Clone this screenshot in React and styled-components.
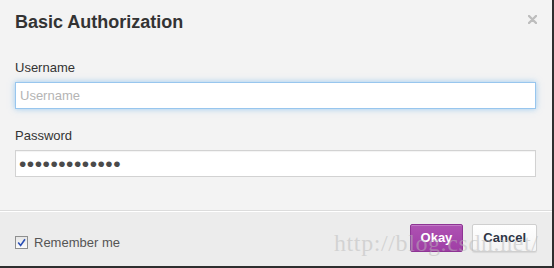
import styled, { createGlobalStyle } from 'styled-components'

const GlobalStyle = createGlobalStyle`
  html, body {
    margin: 0;
    padding: 0;
    background: #2e2e2e;
  }
  body {
    font-family: "Liberation Sans", Arial, sans-serif;
    color: #333;
  }
`

const Dialog = styled.div`
  position: relative;
  width: 552px;
  height: 266px;
  background: #f3f3f3;
  display: flex;
  flex-direction: column;
  overflow: hidden;
`

const Header = styled.div`
  display: flex;
  justify-content: space-between;
  align-items: flex-start;
  padding: 12px 15px 12px 15px;
`

const Title = styled.h3`
  margin: 0;
  font-size: 18px;
  line-height: 21px;
  font-weight: bold;
  color: #333;
`

const Close = styled.button`
  border: 0;
  background: none;
  padding: 0;
  margin-top: 3px;
  width: 9px;
  height: 9px;
  display: flex;
  cursor: pointer;
`

const Body = styled.form`
  flex: 1;
  display: flex;
  flex-direction: column;
  gap: 19px;
  padding: 15px 16px 0 15px;
`

const Field = styled.div`
  display: flex;
  flex-direction: column;
  gap: 6px;
`

const Label = styled.label`
  font-size: 13px;
  line-height: 16px;
  color: #333;
`

const Input = styled.input`
  box-sizing: border-box;
  width: 100%;
  height: 27px;
  padding: 0 4px;
  margin: 0;
  font-family: "Liberation Sans", Arial, sans-serif;
  font-size: 13px;
  color: #555;
  background: #fff;
  border: 1px solid ${(p) => (p.$focused ? '#98c6ee' : '#d2d2d2')};
  box-shadow: ${(p) =>
    p.$focused
      ? '0 0 6px rgba(82, 168, 236, 0.55)'
      : 'inset 0 1px 1px rgba(0, 0, 0, 0.05)'};
  outline: none;
  border-radius: 0;
  &::placeholder {
    color: #b4b4b4;
  }
  &[type='password'] {
    font-size: 21px;
    letter-spacing: 0.5px;
    padding-left: 3px;
    color: #4a4a4a;
  }
`

const Footer = styled.div`
  height: 55px;
  display: flex;
  align-items: center;
  justify-content: space-between;
  padding: 0 15px;
  background: #ececec;
  border-top: 1px solid #dcdcdc;
  box-shadow: inset 0 1px 0 #fff;
`

const Remember = styled.label`
  display: flex;
  align-items: center;
  gap: 6px;
  font-size: 13px;
  color: #555;
  margin-top: 8px;
`

const CheckBox = styled.span`
  box-sizing: border-box;
  width: 13px;
  height: 13px;
  border: 1px solid #8e8f8f;
  background: linear-gradient(#e6e6e6, #fbfbfb);
  display: flex;
  align-items: center;
  justify-content: center;
`

const Actions = styled.div`
  display: flex;
  gap: 9px;
  margin-top: -2px;
`

const Button = styled.button`
  box-sizing: border-box;
  height: 28px;
  padding: 0 10px;
  font-family: "Liberation Sans", Arial, sans-serif;
  font-size: 13px;
  font-weight: bold;
  border-radius: 2px;
  cursor: pointer;
  color: ${(p) => (p.$primary ? '#fff' : '#2d3545')};
  background: ${(p) =>
    p.$primary
      ? 'linear-gradient(#ae52b3, #9f3ea5)'
      : 'linear-gradient(#fff, #f4f4f4)'};
  border: 1px solid ${(p) => (p.$primary ? '#8e3494' : '#cfcfcf')};
  box-shadow: ${(p) =>
    p.$primary ? 'inset 0 1px 0 rgba(255,255,255,0.25)' : '0 1px 1px rgba(0,0,0,0.08)'};
`

const Watermark = styled.div`
  position: absolute;
  left: 334px;
  top: 231px;
  font-family: "Liberation Serif", "DejaVu Serif", serif;
  font-size: 24px;
  line-height: 24px;
  letter-spacing: 0.6px;
  color: rgba(185, 185, 185, 0.5);
  pointer-events: none;
  white-space: nowrap;
`

export default function App() {
  return (
    <>
      <GlobalStyle />
      <Dialog>
        <Header>
          <Title>Basic Authorization</Title>
          <Close type="button" aria-label="Close">
            <svg width="9" height="9" viewBox="0 0 9 9">
              <path
                d="M1 1 L8 8 M8 1 L1 8"
                stroke="#bdbdbd"
                strokeWidth="2.4"
                strokeLinecap="round"
              />
            </svg>
          </Close>
        </Header>
        <Body onSubmit={(e) => e.preventDefault()}>
          <Field>
            <Label htmlFor="user">Username</Label>
            <Input id="user" placeholder="Username" $focused />
          </Field>
          <Field>
            <Label htmlFor="pass">Password</Label>
            <Input
              id="pass"
              type="password"
              defaultValue="1234567890123"
            />
          </Field>
        </Body>
        <Footer>
          <Remember>
            <CheckBox>
              <svg width="9" height="9" viewBox="0 0 9 9">
                <path
                  d="M1.2 4.6 L3.6 7.4 L8 1.2"
                  fill="none"
                  stroke="#2a4fb5"
                  strokeWidth="1.6"
                />
              </svg>
            </CheckBox>
            Remember me
          </Remember>
          <Actions>
            <Button type="button" $primary>
              Okay
            </Button>
            <Button type="button">Cancel</Button>
          </Actions>
        </Footer>
        <Watermark>http://blog.csdn.net/</Watermark>
      </Dialog>
    </>
  )
}
